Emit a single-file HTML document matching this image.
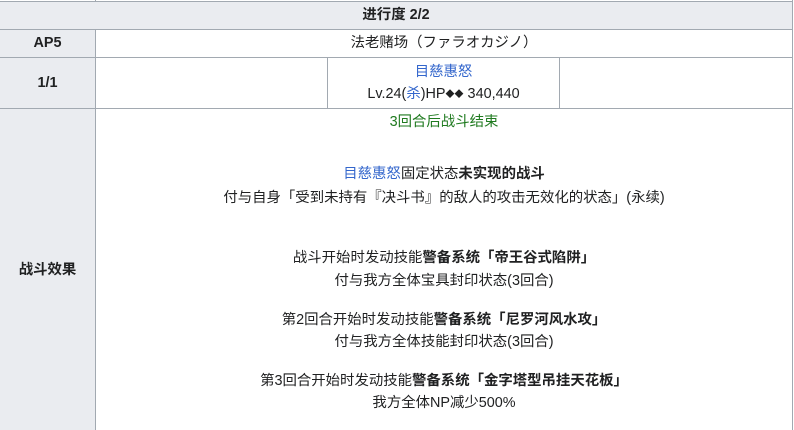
<!DOCTYPE html>
<html><head><meta charset="utf-8"><style>
*{margin:0;padding:0;box-sizing:border-box}
body{width:794px;height:430px;background:#fff;position:relative;overflow:hidden;font-family:"Liberation Sans","Noto Sans CJK SC",sans-serif;font-size:14.4px;color:#202122}
.b{position:absolute;background:#eaecf0}
.h{position:absolute;background:#a2a9b1}
.t{position:absolute;left:96px;width:696px;text-align:center;line-height:16px;white-space:nowrap}
.l{position:absolute;left:0;width:95px;text-align:center;font-weight:bold;line-height:16px}
b{font-weight:bold}
.blue{color:#3366cc}
.g{color:#1f7a1f}
.d{font-size:9px;vertical-align:1px}
</style></head><body>
<div class="b" style="left:0;top:2px;width:792px;height:27px"></div>
<div class="b" style="left:0;top:29px;width:95px;height:401px"></div>
<div class="h" style="left:0;top:1px;width:793px;height:1px"></div>
<div class="h" style="left:95px;top:0;width:1px;height:1px"></div>
<div class="h" style="left:0;top:29px;width:793px;height:1px"></div>
<div class="h" style="left:0;top:57px;width:793px;height:1px"></div>
<div class="h" style="left:0;top:108px;width:793px;height:1px"></div>
<div class="h" style="left:95px;top:29px;width:1px;height:401px"></div>
<div class="h" style="left:327px;top:57px;width:1px;height:51px"></div>
<div class="h" style="left:559px;top:57px;width:1px;height:51px"></div>
<div class="h" style="left:792px;top:0;width:1px;height:430px"></div>

<div class="t" style="left:0;width:792px;top:7px;font-weight:bold">进行度 2/2</div>
<div class="l" style="top:35px">AP5</div>
<div class="t" style="top:35px">法老赌场（ファラオカジノ）</div>
<div class="l" style="top:75px">1/1</div>
<div class="t" style="left:328px;width:231px;top:64px"><span class="blue">目慈惠怒</span></div>
<div class="t" style="left:328px;width:231px;top:86px">Lv.24(<span class="blue">杀</span>)HP<span class="d">◆◆</span> 340,440</div>
<div class="t g" style="top:114px">3回合后战斗结束</div>
<div class="l" style="top:262px">战斗效果</div>
<div class="t" style="top:166px"><span class="blue">目慈惠怒</span>固定状态<b>未实现的战斗</b></div>
<div class="t" style="top:190px">付与自身「受到未持有『决斗书』的敌人的攻击无效化的状态」(永续)</div>
<div class="t" style="top:250px">战斗开始时发动技能<b>警备系统「帝王谷式陷阱」</b></div>
<div class="t" style="top:273px">付与我方全体宝具封印状态(3回合)</div>
<div class="t" style="top:312px">第2回合开始时发动技能<b>警备系统「尼罗河风水攻」</b></div>
<div class="t" style="top:334px">付与我方全体技能封印状态(3回合)</div>
<div class="t" style="top:373px">第3回合开始时发动技能<b>警备系统「金字塔型吊挂天花板」</b></div>
<div class="t" style="top:395px">我方全体NP减少500%</div>
</body></html>
